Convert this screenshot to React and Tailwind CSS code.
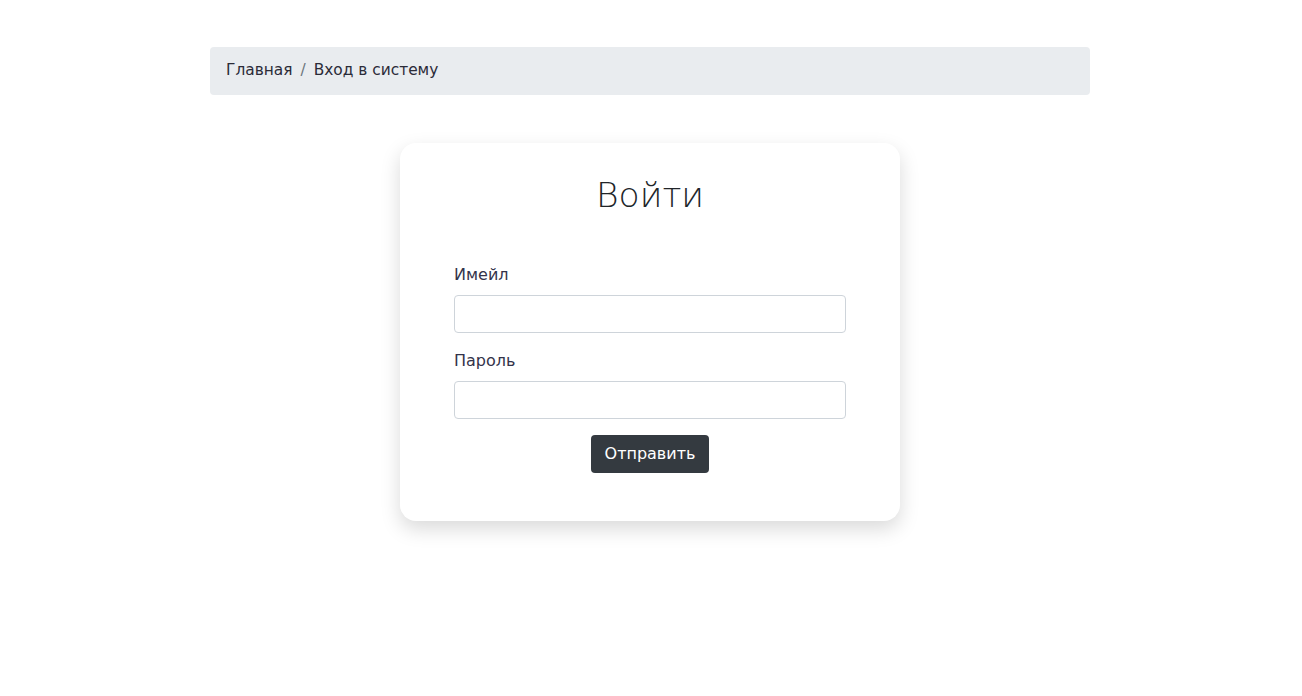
export default function App() {
  const font = { fontFamily: '"DejaVu Sans", "Noto Sans", sans-serif' };
  return (
    <div className="min-h-[696px] bg-white pr-[2px] text-[#212529]" style={font}>
      <div className="mx-auto w-[880px] pt-[47px]">
        <nav className="flex h-[48px] items-center rounded-[4px] bg-[#e9ecef] px-4 text-[15.4px]">
          <span className="text-[#2b2b38]">Главная</span>
          <span className="px-2 text-[#6c757d]">/</span>
          <span className="text-[#2b2b38]">Вход в систему</span>
        </nav>
        <div className="mx-auto mt-[48px] w-[500px] rounded-[16px] bg-white px-[54px] pb-[48px] pt-[30px] shadow-[0_8px_20px_rgba(0,0,0,0.15)]">
          <h1 className="text-center text-[34.5px] font-light leading-[44px] text-[#212529]">Войти</h1>
          <form className="mt-[46px] flex flex-col">
            <label className="text-[16px] leading-[24px] text-[#33334a]">Имейл</label>
            <input type="email" className="mt-[8px] h-[38px] w-full rounded-[4px] border border-[#ced4da] px-3" />
            <label className="mt-[16px] text-[16px] leading-[24px] text-[#33334a]">Пароль</label>
            <input type="password" className="mt-[8px] h-[38px] w-full rounded-[4px] border border-[#ced4da] px-3" />
            <div className="mt-[16px] flex justify-center">
              <button type="button" className="h-[38px] rounded-[4px] bg-[#343a40] px-[14px] text-[16px] text-white">Отправить</button>
            </div>
          </form>
        </div>
      </div>
    </div>
  );
}
